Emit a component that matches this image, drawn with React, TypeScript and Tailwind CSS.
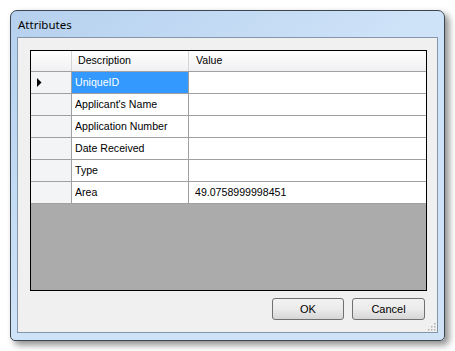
import React from "react";

const rows: { d: string; v: string }[] = [
  { d: "UniqueID", v: "" },
  { d: "Applicant's Name", v: "" },
  { d: "Application Number", v: "" },
  { d: "Date Received", v: "" },
  { d: "Type", v: "" },
  { d: "Area", v: "49.0758999998451" },
];

export default function App() {
  return (
    <div className="w-[455px] h-[351px] bg-white pl-[10px] pt-[10px]" style={{ fontFamily: '"Liberation Sans", Arial, sans-serif' }}>
      <div className="relative w-[435px] h-[331px] rounded-t-[7px] rounded-b-[5px] border border-[#3c4650] bg-gradient-to-br from-[#b5d0ee] via-[#cfe3f8] to-[#cfe2f6] shadow-[4px_4px_7px_rgba(0,0,0,0.45)] flex flex-col">
        <div className="h-[26px] flex items-center pl-[7px] pt-[2px] text-[11.5px] text-black" style={{ fontFamily: '"Noto Sans", "Open Sans", sans-serif' }}>
          Attributes
        </div>
        <div className="ml-[6px] mr-[6px] mb-[7px] flex-1 border border-[#8497aa] bg-[#f0f0f0] flex flex-col pl-[12px] pt-[12px] pr-[10px]">
          <div className="w-[397px] h-[241px] border border-black bg-[#ababab] flex flex-col text-[10.6px] text-black">
            <div className="flex h-[21px] border-b border-[#a0a0a0] bg-gradient-to-b from-white to-[#f0f0f2]">
              <div className="w-[41px] border-r border-[#d5d5d5]" />
              <div className="w-[117px] border-r border-[#d5d5d5] pl-[6px] flex items-center">Description</div>
              <div className="flex-1 pl-[7px] flex items-center">Value</div>
            </div>
            {rows.map((r, i) => (
              <div key={r.d} className="flex h-[22px] border-b border-[#a0a0a0] bg-white">
                <div className="w-[41px] border-r border-[#a0a0a0] bg-[#f3f4f6] flex items-center pl-[6px]">
                  {i === 0 && (
                    <svg width="5" height="9" viewBox="0 0 5 9">
                      <path d="M0 0 L4.5 4.5 L0 9 Z" fill="#000" />
                    </svg>
                  )}
                </div>
                <div className={`w-[117px] border-r border-[#a0a0a0] pl-[3px] pt-[1px] flex items-center ${i === 0 ? "bg-[#3399ff] text-white" : ""}`}>
                  {r.d}
                </div>
                <div className="flex-1 pl-[6px] pt-[1px] flex items-center">{r.v}</div>
              </div>
            ))}
          </div>
          <div className="flex justify-end gap-[8px] mt-[7px] mr-[2px] text-[11px]">
            <button className="w-[72px] h-[22px] rounded-[3px] border border-[#707070] bg-gradient-to-b from-[#f2f2f2] via-[#ebebeb] to-[#d6d6d6] text-black">
              OK
            </button>
            <button className="w-[73px] h-[22px] rounded-[3px] border border-[#707070] bg-gradient-to-b from-[#f2f2f2] via-[#ebebeb] to-[#d6d6d6] text-black">
              Cancel
            </button>
          </div>
          <div className="flex-1 flex justify-end items-end pb-[1px] -mr-[9px]">
            <svg width="10" height="10" viewBox="0 0 10 10">
              {[[8, 2], [8, 5], [5, 5], [8, 8], [5, 8], [2, 8]].map(([x, y]) => (
                <rect key={`${x}-${y}`} x={x} y={y} width="1.5" height="1.5" fill="#b0b0b0" />
              ))}
            </svg>
          </div>
        </div>
      </div>
    </div>
  );
}
